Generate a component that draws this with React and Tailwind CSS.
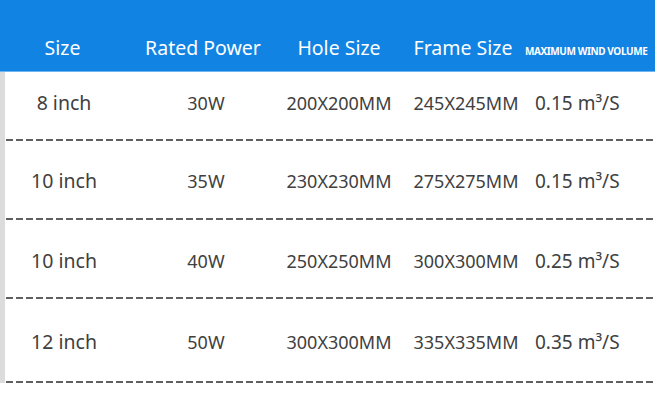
const headers = ['Size', 'Rated Power', 'Hole Size', 'Frame Size']

const rows = [
  { size: '8 inch', power: '30W', hole: '200X200MM', frame: '245X245MM', wind: '0.15', h: 'h-[67px]', pt: 'pt-[19px]' },
  { size: '10 inch', power: '35W', hole: '230X230MM', frame: '275X275MM', wind: '0.15', h: 'h-[77px]', pt: 'pt-[28px]' },
  { size: '10 inch', power: '40W', hole: '250X250MM', frame: '300X300MM', wind: '0.25', h: 'h-[77px]', pt: 'pt-[29px]' },
  { size: '12 inch', power: '50W', hole: '300X300MM', frame: '335X335MM', wind: '0.35', h: 'h-[82px]', pt: 'pt-[31px]' },
]

export default function App() {
  return (
    <div className="w-[655px] h-[410px] bg-white overflow-hidden font-['Noto_Sans',sans-serif]">
      {/* Header */}
      <div className="h-[72px] bg-[#1183e3] border-b border-[#6db5f2] pt-[36px]">
        <div className="grid grid-cols-[125px_156px_116px_132px_1fr] items-baseline text-white">
          {headers.map((h) => (
            <div key={h} className="text-center text-[19.5px] leading-[24px]">{h}</div>
          ))}
          <div className="-ml-[4px] text-[10px] font-bold tracking-[-0.4px] whitespace-nowrap">MAXIMUM WIND VOLUME</div>
        </div>
      </div>

      {/* Body */}
      <div className="border-l-[5px] border-[#dcdcdc] w-full">
        {rows.map((r, i) => (
          <div key={i}>
            <div className={`${r.h} ${r.pt} grid grid-cols-[122px_154px_116px_132px_1fr] items-baseline text-[18px] leading-[24px] text-[#404040]`}>
              <div className="text-center pr-[4px] text-[19.5px]">{r.size}</div>
              <div className="text-center pl-[4px]">{r.power}</div>
              <div className="text-center">{r.hole}</div>
              <div className="text-center pl-[6px]">{r.frame}</div>
              <div className="pl-[6px] whitespace-nowrap text-[19px]">{r.wind} m³/S</div>
            </div>
            <div className="h-[2px] ml-[1px] bg-[repeating-linear-gradient(90deg,#606060_0_7px,transparent_7px_10px)]" />
          </div>
        ))}
      </div>
    </div>
  )
}
